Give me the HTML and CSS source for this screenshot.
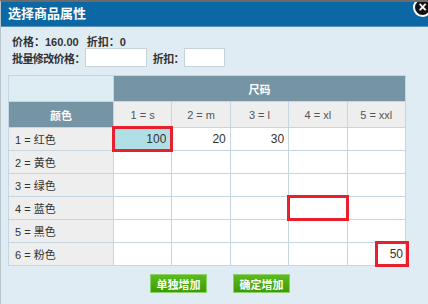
FILE: index.html
```html
<!DOCTYPE html>
<html lang="zh">

<head>
    <meta charset="UTF-8">
    <meta name="viewport" content="width=device-width, initial-scale=1.0">
    <title>选择商品属性</title>
    <link rel="stylesheet" href="styles.css">
</head>

<body>

    <div class="dialog">
        <div class="dialog-title">选择商品属性</div>
        <span class="close-btn">&times;</span>

        <div class="dialog-body">
            <div class="info-line">
                <span>价格：160.00</span>
                <span class="gap">折扣：0</span>
            </div>
            <div class="batch-line">
                <label>批量修改价格：</label>
                <input type="text" class="batch-price">
                <label class="gap-label">折扣：</label>
                <input type="text" class="batch-discount">
            </div>

            <table class="attr-table">
                <tr class="head-top">
                    <th class="corner"></th>
                    <th colspan="5" class="dark">尺码</th>
                </tr>
                <tr class="head-sizes">
                    <th class="dark">颜色</th>
                    <th>1 = s</th>
                    <th>2 = m</th>
                    <th>3 = l</th>
                    <th>4 = xl</th>
                    <th>5 = xxl</th>
                </tr>
                <tr>
                    <td class="label">1 = 红色</td>
                    <td><input type="text" class="cell-input err active" value="100"></td>
                    <td><input type="text" class="cell-input" value="20"></td>
                    <td><input type="text" class="cell-input" value="30"></td>
                    <td><input type="text" class="cell-input"></td>
                    <td><input type="text" class="cell-input"></td>
                </tr>
                <tr>
                    <td class="label">2 = 黄色</td>
                    <td><input type="text" class="cell-input"></td>
                    <td><input type="text" class="cell-input"></td>
                    <td><input type="text" class="cell-input"></td>
                    <td><input type="text" class="cell-input"></td>
                    <td><input type="text" class="cell-input"></td>
                </tr>
                <tr>
                    <td class="label">3 = 绿色</td>
                    <td><input type="text" class="cell-input"></td>
                    <td><input type="text" class="cell-input"></td>
                    <td><input type="text" class="cell-input"></td>
                    <td><input type="text" class="cell-input"></td>
                    <td><input type="text" class="cell-input"></td>
                </tr>
                <tr>
                    <td class="label">4 = 蓝色</td>
                    <td><input type="text" class="cell-input"></td>
                    <td><input type="text" class="cell-input"></td>
                    <td><input type="text" class="cell-input"></td>
                    <td><input type="text" class="cell-input err"></td>
                    <td><input type="text" class="cell-input"></td>
                </tr>
                <tr>
                    <td class="label">5 = 黑色</td>
                    <td><input type="text" class="cell-input"></td>
                    <td><input type="text" class="cell-input"></td>
                    <td><input type="text" class="cell-input"></td>
                    <td><input type="text" class="cell-input"></td>
                    <td><input type="text" class="cell-input"></td>
                </tr>
                <tr>
                    <td class="label">6 = 粉色</td>
                    <td><input type="text" class="cell-input"></td>
                    <td><input type="text" class="cell-input"></td>
                    <td><input type="text" class="cell-input"></td>
                    <td><input type="text" class="cell-input"></td>
                    <td><input type="text" class="cell-input err short" value="50"></td>
                </tr>
            </table>

            <div class="actions">
                <button class="green-btn">单独增加</button>
                <button class="green-btn">确定增加</button>
            </div>
        </div>
    </div>

</body>

</html>
```

FILE: styles.css
```css
body {
    margin: 0;
    padding: 0;
    font-family: "Liberation Sans", "Noto Sans CJK SC", sans-serif;
    font-size: 11px;
    color: #333;
    background-color: #dfecf4;
}

.dialog {
    position: relative;
    height: 304px;
    border-top: 2px solid #6b6b6b;
    border-left: 1px solid #b8c4cc;
    box-sizing: border-box;
    overflow: hidden;
}

.dialog-title {
    height: 24px;
    line-height: 24px;
    padding-left: 7px;
    background-color: #0b68a5;
    color: #fff;
    font-size: 13px;
    font-weight: bold;
    border-bottom: 1px solid #5b93bd;
}

.close-btn {
    position: absolute;
    top: -4px;
    right: -4px;
    width: 15px;
    height: 15px;
    line-height: 14px;
    text-align: center;
    border-radius: 50%;
    background-color: #111;
    border: 2px solid #fff;
    color: #fff;
    font-size: 14px;
    font-weight: bold;
}

.dialog-body {
    padding: 9px 0 0 7px;
}

.info-line {
    height: 12px;
    line-height: 12px;
    padding-left: 4px;
    font-weight: bold;
    color: #333;
}

.info-line .gap {
    margin-left: 5px;
}

.batch-line {
    display: flex;
    align-items: center;
    height: 19px;
    padding-left: 4px;
    font-weight: bold;
}

.batch-line label {
    letter-spacing: -0.6px;
}

.batch-line input {
    height: 19px;
    box-sizing: border-box;
    border: 1px solid #c8d2d8;
    background-color: #fff;
    padding: 0 3px;
}

.batch-price {
    width: 62px;
}

.gap-label {
    margin-left: 6px;
}

.batch-discount {
    width: 41px;
}

.attr-table {
    margin-top: 8px;
    width: 398px;
    border-collapse: collapse;
    table-layout: fixed;
}

.attr-table th,
.attr-table td {
    border: 1px solid #c4d6e2;
    padding: 0;
    font-size: 11px;
}

.attr-table th {
    height: 25px;
    font-weight: normal;
    background-color: #eeeeee;
    color: #555;
}

.attr-table th.corner {
    width: 104px;
    background-color: #deecf4;
}

.attr-table th.dark {
    background-color: #7594a4;
    color: #fff;
    font-weight: bold;
}

.attr-table td {
    height: 22px;
    background-color: #fff;
}

.attr-table td.label {
    background-color: #eeeeee;
    padding-left: 6px;
    color: #333;
}

.cell-input {
    display: block;
    width: 100%;
    height: 22px;
    box-sizing: border-box;
    border: none;
    background: transparent;
    text-align: right;
    padding: 0 4px;
    font-family: "Liberation Sans", sans-serif;
    font-size: 12px;
    color: #333;
}

.cell-input.err {
    outline: 3px solid #e8202d;
    outline-offset: -1px;
}

.cell-input.active {
    background-color: #b1dfe6;
    border: 1px solid #6aa6d8;
}

.cell-input.short {
    width: 30px;
    margin-left: auto;
    margin-right: -2px;
}

.actions {
    display: flex;
    gap: 26px;
    padding: 8px 0 0 142px;
}

.green-btn {
    width: 57px;
    height: 19px;
    padding: 0;
    border: 1px solid #8fd06a;
    background: linear-gradient(#5bbc1e, #3b9c05);
    color: #fff;
    font-family: "Noto Sans CJK SC", sans-serif;
    font-size: 11px;
    font-weight: bold;
    line-height: 16px;
    cursor: pointer;
}
```
